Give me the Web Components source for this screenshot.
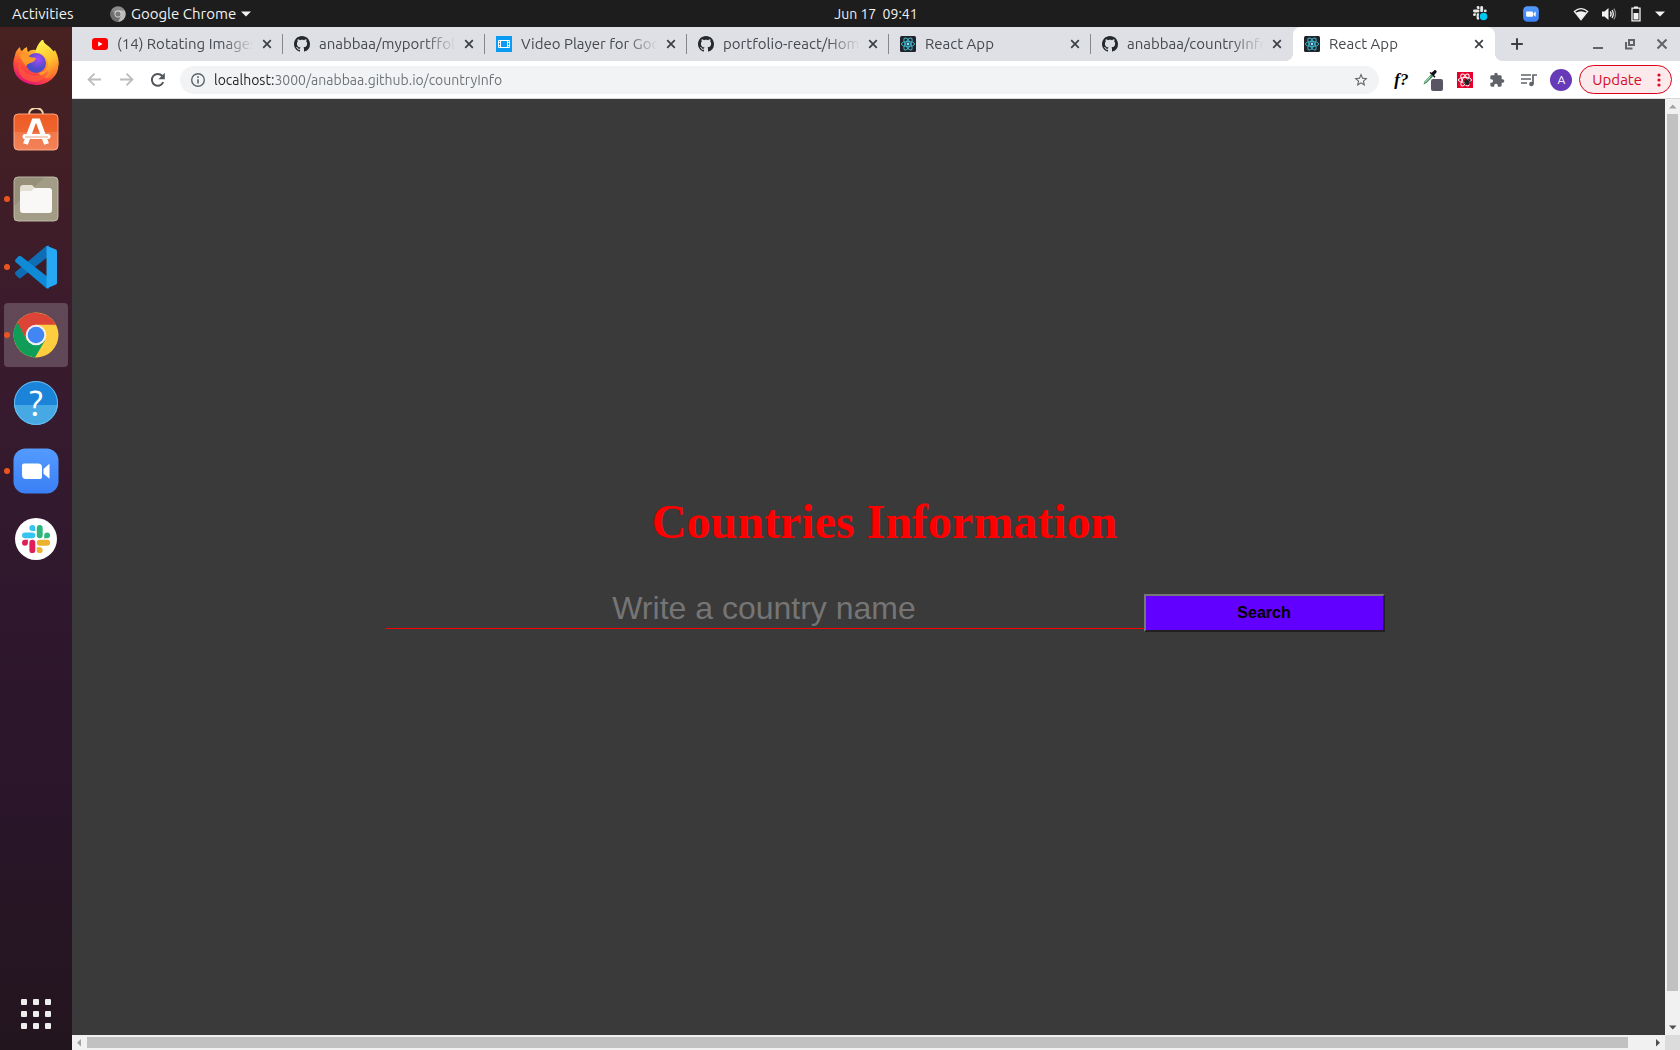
<!DOCTYPE html>
<html lang="en">
<head>
<meta charset="utf-8">
<title>React App</title>
<style>
html,body{margin:0;height:100%}
body{font-family:Ubuntu,"Noto Sans",sans-serif;overflow:hidden}
</style>
</head>
<body>
<desk-top></desk-top>
<script>
const slackArm='<path d="M8.834 5.042a2.528 2.528 0 0 1-2.521-2.52A2.528 2.528 0 0 1 8.834 0a2.528 2.528 0 0 1 2.521 2.522v2.52zM8.834 6.313a2.528 2.528 0 0 1 2.521 2.521 2.528 2.528 0 0 1-2.521 2.521H2.522A2.528 2.528 0 0 1 0 8.834a2.528 2.528 0 0 1 2.522-2.521z"';
const slack=(a,b,c,d)=>slackArm+` fill="${a}"/>`+slackArm+` fill="${b}" transform="rotate(90 12 12)"/>`+slackArm+` fill="${c}" transform="rotate(180 12 12)"/>`+slackArm+` fill="${d}" transform="rotate(270 12 12)"/>`;
const atom='<g fill="none" stroke-width="1"><ellipse cx="8" cy="8" rx="6.6" ry="2.6"/><ellipse cx="8" cy="8" rx="6.6" ry="2.6" transform="rotate(60 8 8)"/><ellipse cx="8" cy="8" rx="6.6" ry="2.6" transform="rotate(120 8 8)"/></g>';
// name: [viewBox, markup]
const ICONS={
youtube:['0 0 16 16','<rect y="2" width="16" height="12" rx="3" fill="#f00"/><path d="M6.2 5.6v4.8L10.6 8z" fill="#fff"/>'],
github:['0 0 16 16','<path fill="#24292e" d="M8 0C3.58 0 0 3.58 0 8c0 3.54 2.29 6.53 5.47 7.59.4.07.55-.17.55-.38 0-.19-.01-.82-.01-1.49-2.01.37-2.53-.49-2.69-.94-.09-.23-.48-.94-.82-1.13-.28-.15-.68-.52-.01-.53.63-.01 1.08.58 1.23.82.72 1.21 1.87.87 2.33.66.07-.52.28-.87.51-1.07-1.78-.2-3.64-.89-3.64-3.95 0-.87.31-1.59.82-2.15-.08-.2-.36-1.02.08-2.12 0 0 .67-.21 2.2.82.64-.18 1.32-.27 2-.27.68 0 1.36.09 2 .27 1.53-1.04 2.2-.82 2.2-.82.44 1.1.16 1.92.08 2.12.51.56.82 1.27.82 2.15 0 3.07-1.87 3.75-3.65 3.95.29.25.54.73.54 1.48 0 1.07-.01 1.93-.01 2.2 0 .21.15.46.55.38A8.013 8.013 0 0016 8c0-4.42-3.58-8-8-8z"/>'],
film:['0 0 16 16','<path fill="#0a9cf5" d="M0 0h16v16H0z"/><path fill="none" stroke="#fff" d="M2.5 4.5h11v7h-11zM4.500 4.500v7M11.500 4.500v7"/><path stroke="#fff" stroke-width=".8" d="M2.500 6.500h2M2.500 9.500h2M11.500 6.500h2M11.500 9.500h2"/>'],
react:['0 0 16 16','<rect width="16" height="16" rx="1.500" fill="#20232a"/><g stroke="#3fb3c9">'+atom+'</g><circle cx="8" cy="8" r="1.400" fill="#7fe6fa"/>'],
bug:['0 0 16 16','<path fill="#e8002d" d="M0 0h16v16H0z"/><g stroke="#fff">'+atom+'</g><g transform="rotate(-30 10 10)"><ellipse cx="10" cy="10" rx="2.200" ry="3.200" fill="#222"/><path stroke="#222" stroke-width=".8" d="M6.500 8l7 4M6.500 12l7-4M6.500 10h7"/></g>'],
close:['0 0 16 16','<path d="M4.200 4.200l7.600 7.600M11.800 4.200l-7.600 7.600" stroke="currentColor" stroke-width="1.700"/>'],
plus:['0 0 16 16','<path d="M8 2.200v11.600M2.200 8h11.600" stroke="#3c4043" stroke-width="2"/>'],
minimize:['0 0 16 16','<path d="M3 12h10" stroke="#606368" stroke-width="2"/>'],
restore:['0 0 16 16','<path d="M7 4h5v5H7zM4 6v6.500h6.500" fill="none" stroke="#606368" stroke-width="2"/>'],
winclose:['0 0 16 16','<path d="M3.500 3.500l9 9M12.500 3.500l-9 9" stroke="#606368" stroke-width="2"/>'],
back:['0 0 16 16','<path d="M15 8H2M8 1.700L1.700 8 8 14.300" fill="none" stroke="#babcbe" stroke-width="1.900"/>'],
forward:['0 0 16 16','<path d="M1 8h13M8 1.700L14.300 8 8 14.300" fill="none" stroke="#babcbe" stroke-width="1.900"/>'],
reload:['0 0 16 16','<path d="M13.200 10.200A5.900 5.900 0 1 1 12.300 4" fill="none" stroke="#54575b" stroke-width="2"/><path d="M14.800.8v6.400H8.400z" fill="#54575b"/>'],
info:['0 0 16 16','<circle cx="8" cy="8" r="6.300" fill="none" stroke="#5f6368" stroke-width="1.400"/><path d="M8 7.200v4.300M8 4.300v1.600" stroke="#5f6368" stroke-width="1.600"/>'],
star:['0 0 24 24','<path fill="#5f6368" d="M22 9.240l-7.190-.62L12 2 9.190 8.630 2 9.240l5.460 4.730L5.820 21 12 17.270 18.180 21l-1.630-7.030L22 9.240zM12 15.400l-3.760 2.270 1-4.280-3.320-2.880 4.380-.38L12 6.100l1.710 4.040 4.380.38-3.320 2.880 1 4.280L12 15.400z"/>'],
dropper:['0 0 22 22','<path d="M1.500 15.500l1-3 6.500-7 2 2-6.500 6.500z" fill="#3c8f55"/><path d="M3 13.500l5.500-6" stroke="#d5ecdc"/><path d="M7.500 3.800l5 5 1-1-1.400-1.600 2.300-2.700c1-1.300-1-3.100-2.200-2.100L9.600 3.800 8.700 3z" fill="#111"/><rect x="9" y="10" width="12" height="12" rx="2" fill="#5a5564"/>'],
puzzle:['0 0 24 24','<path fill="#5f6368" d="M20.500 11H19V7c0-1.100-.9-2-2-2h-4V3.500a2.500 2.500 0 0 0-5 0V5H4c-1.100 0-2 .9-2 2v3.800h1.500a2.700 2.700 0 0 1 0 5.400H2V20c0 1.100.9 2 2 2h3.800v-1.500a2.700 2.700 0 0 1 5.400 0V22H17c1.100 0 2-.9 2-2v-4h1.500a2.500 2.500 0 0 0 0-5z"/>'],
playlist:['0 0 18 16','<path stroke="#5f6368" stroke-width="1.700" d="M1 3h10M1 7h10M1 11h6"/><circle cx="11.400" cy="12" r="2.300" fill="#5f6368"/><path d="M13 12V3h4" fill="none" stroke="#5f6368" stroke-width="1.700"/>'],
dots:['0 0 4 14','<g fill="#d50c22"><circle cx="2" cy="2" r="1.600"/><circle cx="2" cy="7" r="1.600"/><circle cx="2" cy="12" r="1.600"/></g>'],
caret:['0 0 10 6','<path d="M0 .5h10L5 5.500z" fill="#f2f2f2"/>'],
chromegray:['0 0 16 16','<circle cx="8" cy="8" r="7.700" fill="#8b8b8b"/><path d="M8 4.500h6.700A7.700 7.700 0 0 1 8 15.700l3-5.900z" fill="#bdbdbd"/><path d="M1.800 3.600A7.700 7.700 0 0 0 8 15.700l3-5.900H5z" fill="#6e6e6e"/><circle cx="8" cy="8" r="3.400" fill="#ddd"/><circle cx="8" cy="8" r="2.600" fill="#777"/>'],
slacktray:['0 0 28 28',slack('#e8e8e8','#e8e8e8','#e8e8e8','#e8e8e8')+'<circle cx="18" cy="18" r="8" fill="#1d1d1d"/><circle cx="18.500" cy="18.500" r="6.600" fill="#00c8f0"/>'],
zoom:['0 0 46 46','<defs><linearGradient id="z" x2="0" y2="1"><stop stop-color="#549bff"/><stop offset="1" stop-color="#3b7ff5"/></linearGradient></defs><rect x=".5" y=".5" width="45" height="45" rx="12" fill="url(#z)"/><path fill="#fff" d="M9 17.500a2 2 0 0 1 2-2h14a4 4 0 0 1 4 4V29a2 2 0 0 1-2 2H13a4 4 0 0 1-4-4zM30.500 21l6-5.200v15l-6-5z"/>'],
wifi:['0 0 16 14','<path fill="none" stroke="#f2f2f2" stroke-width="1.300" d="M1.300 4.400Q8-1.100 14.700 4.400L8 12.600z"/><path fill="#f2f2f2" d="M2.600 5.800Q8 2.600 13.400 5.800L8 12.600z"/>'],
volume:['0 0 16 14','<path fill="#f2f2f2" d="M1 4.500h2.500L7.500 1v12L3.500 9.500H1z"/><path fill="none" stroke="#f2f2f2" stroke-width="1.300" d="M9.300 4.500q1.800 2.500 0 5M11 3q2.600 4 0 8" /><path fill="none" stroke="#8a8a8a" stroke-width="1.300" d="M12.800 1.600q3.500 5.400 0 10.800"/>'],
battery:['0 0 10 16','<path fill="none" stroke="#f2f2f2" stroke-width="1.300" d="M1 2.200h8v12.600H1z"/><path fill="#f2f2f2" d="M3 .4h4v1.800H3zM2.500 7h5v6.500h-5z"/>'],
firefox:['0 0 46 46','<defs><linearGradient id="fa" x1=".8" y1=".1" x2=".3" y2="1"><stop stop-color="#fff04a"/><stop offset=".35" stop-color="#ffa22b"/><stop offset=".65" stop-color="#ff5035"/><stop offset="1" stop-color="#e3107e"/></linearGradient><radialGradient id="fb" cx=".6" cy=".3"><stop stop-color="#a84bf5"/><stop offset="1" stop-color="#4d4cc8"/></radialGradient><linearGradient id="fc" x1=".3" y1="0" x2=".7" y2="1"><stop stop-color="#fff44f"/><stop offset=".6" stop-color="#ffbf2d"/><stop offset="1" stop-color="#ff6a2f"/></linearGradient></defs><g transform="translate(0 -1)"><path fill="url(#fa)" d="M2 16q1-5 5-8 0 3 2 4 2-3 5-4 0 3 1 5 3-3 8-2l7-8q13 9 15 18 2 12-6 19-7 6-16 6Q9 45 3 36-2 27 2 16z"/><path fill="url(#fc)" d="M22 14Q24 5 30 0q1 6 6 9l4 4 2-2q6 11 2 20-3 6-9 8-7 0-9-5 10-2 9-11Q31 13 22 14z"/><circle cx="23" cy="24" r="10" fill="url(#fb)"/><path fill="#ff9a2a" d="M6 16q7-3 11 2l6 1q-1 4-6 5-3 1-4 3-4-5-7-11z"/><path fill="#ff5a38" opacity=".75" d="M8 17q-3 17 13 20 10 0 14-6-1 10-13 12Q7 42 5 29z"/></g>'],
software:['0 2 46 46','<defs><linearGradient id="s" x2="0" y2="1"><stop stop-color="#ee5a23"/><stop offset="1" stop-color="#f0703f"/></linearGradient></defs><path d="M16 11V8a7 6 0 0 1 14 0v3" fill="none" stroke="#f6d7a6" stroke-width="2"/><rect x="1" y="8" width="44" height="36" rx="4" fill="url(#s)" stroke="#f9a27e"/><path fill="#fff" opacity=".13" d="M1 26h44v14a4 4 0 0 1-4 4H5a4 4 0 0 1-4-4z"/><path stroke="#fff" stroke-width="5" fill="none" d="M12.500 38L21 15h4l8.500 23"/><path stroke="#fff" stroke-width="5" stroke-linecap="round" d="M12 30.500h23"/><path stroke="#e7a184" d="M12 31h23"/>'],
files:['0 0 46 46','<rect x="1" y="1" width="44" height="44" rx="4" fill="#979078" stroke="#b9b4a3"/><path fill="#fff" opacity=".12" d="M1 30L32 1h9a4 4 0 0 1 4 4v36a4 4 0 0 1-4 4H1z"/><path fill="#e3dfd3" d="M7 12a3 3 0 0 1 3-3h9l4 4h10v8H7z"/><path fill="#f9f8f6" d="M7 17q0-2 2-2h9l4-3h14q3 0 3 3v19a3 3 0 0 1-3 3H10a3 3 0 0 1-3-3z"/>'],
vscode:['0 0 46 46','<path fill="#0f6db3" d="M2.500 30.500l3 3.200q1.200 1 2.600 0L36 12V1.500q-2-.5-4 1.500L2.500 28q-1 1.200 0 2.500z"/><path fill="#0f8ad6" d="M2.500 15.500l3-3.200q1.200-1 2.600 0L36 34v10.500q-2 .5-4-1.500L2.500 18q-1-1.200 0-2.500z"/><path fill="#27a8f2" d="M33.500 1.800L43 5.500q1 .5 1 2v31q0 1.500-1 2l-9.500 4z"/>'],
chrome:['0 0 46 46','<circle cx="23" cy="23" r="22.500" fill="#ffcd40"/><path fill="#db4437" d="M3.500 12A22.500 22.500 0 0 1 43 12.700H23L14 28z"/><path fill="#0f9d58" d="M4.500 10.500A22.500 22.500 0 0 0 22 45.500l10-17H14z"/><circle cx="23" cy="23" r="10.300" fill="#f1f1f1"/><circle cx="23" cy="23" r="8.300" fill="#4285f4"/>'],
help:['0 0 46 46','<defs><clipPath id="h"><circle cx="23" cy="23" r="22"/></clipPath></defs><circle cx="23" cy="23" r="22" fill="#1c84d8"/><path clip-path="url(#h)" fill="#47a9e4" d="M0 25h46v21H0z"/><circle cx="23" cy="23" r="21.500" fill="none" stroke="#6bbcec" stroke-width="1"/><text x="23" y="36" text-anchor="middle" font-family="Ubuntu,Noto Sans,sans-serif" font-size="36" fill="#fff">?</text>'],
slack:['0 0 46 46','<circle cx="23" cy="23" r="21" fill="#fff"/><g transform="translate(9 9) scale(1.170)">'+slack('#36c5f0','#2eb67d','#ecb22e','#e01e5a')+'</g>'],
up:['0 0 15 15','<path d="M4 9.500h7.500L7.750 5.500z" fill="#a3a3a3"/>'],
down:['0 0 15 15','<path d="M4 5.500h7.500L7.750 9.500z" fill="#505050"/>'],
left:['0 0 15 15','<path d="M9 4v7.500L5 7.750z" fill="#a3a3a3"/>'],
right:['0 0 15 15','<path d="M6 4v7.500l4-3.750z" fill="#505050"/>']
};
const define=(name,html,after)=>{
  const t=document.createElement('template');t.innerHTML=html;
  customElements.define(name,class extends HTMLElement{
    connectedCallback(){ if(this.shadowRoot)return;
      this.attachShadow({mode:'open'}).append(t.content.cloneNode(true)); if(after)after(this,this.shadowRoot); }
  });
};
const reset=':host,*{box-sizing:border-box}button{font:inherit;color:inherit;background:none;border:0;padding:0;margin:0;display:flex;align-items:center;justify-content:center}';

define('ui-icon','<style>:host{display:block;flex:none;width:var(--w,16px);height:var(--h,var(--w,16px))}svg{display:block;width:100%;height:100%}</style>',(el,r)=>{
  const [box,body]=ICONS[el.getAttribute('name')];
  r.innerHTML+=`<svg viewBox="${box}" aria-hidden="true">${body}</svg>`;
});

define('top-bar',`<style>${reset}
:host{display:grid;grid-template-columns:72px 1fr auto 1fr;align-items:center;height:27px;background:#1d1d1d;color:#f2f2f2;font-size:15px;line-height:24px;white-space:nowrap}
.act{padding-left:12px;justify-content:flex-start}
.app{justify-self:start;margin-left:38px;gap:5px}
.clock{white-space:pre;font-size:14px}
.tray{display:flex;align-items:center;justify-content:flex-end;padding-right:15px}
.tray button+button{margin-left:34px}.tray .sys{gap:12px}
</style>
<button class="act">Activities</button>
<button class="app"><ui-icon name="chromegray"></ui-icon><span>Google Chrome</span><ui-icon name="caret" style="--w:10px;--h:6px"></ui-icon></button>
<button class="clock">Jun 17  09:41</button>
<div class="tray"><button aria-label="Slack"><ui-icon name="slacktray"></ui-icon></button><button aria-label="Zoom"><ui-icon name="zoom"></ui-icon></button>
<button class="sys" aria-label="System menu"><ui-icon name="wifi" style="--w:16px;--h:14px"></ui-icon><ui-icon name="volume" style="--w:16px;--h:14px"></ui-icon><ui-icon name="battery" style="--w:14px;--h:16px"></ui-icon><ui-icon name="caret" style="--w:10px;--h:6px"></ui-icon></button></div>`);

define('dock-item',`<style>${reset}
:host{display:block}
button{width:64px;height:64px;border-radius:4px;position:relative}
:host([active]) button{background:rgba(255,255,255,.2)}
:host([running]) button::before{content:"";position:absolute;left:0;top:29px;width:6px;height:6px;border-radius:3px;background:#e95420}
ui-icon{--w:46px}
</style><button></button>`,(el,r)=>{
  const b=r.querySelector('button');b.setAttribute('aria-label',el.getAttribute('label'));
  b.innerHTML=`<ui-icon name="${el.getAttribute('icon')}"></ui-icon>`;
});

define('side-dock',`<style>${reset}
:host{display:flex;flex-direction:column;gap:4px;padding:4px;width:72px;background:linear-gradient(#482120,#3a1b2d 30%,#2f182d 55%,#2a152a 75%,#23151e)}
.apps{margin-top:auto;width:64px;height:64px}
.grid{display:grid;grid-template-columns:repeat(3,6px);gap:6px}
i{width:6px;height:6px;border-radius:1px;background:#eee}
</style>
<dock-item icon="firefox" label="Firefox"></dock-item>
<dock-item icon="software" label="Software"></dock-item>
<dock-item icon="files" label="Files" running></dock-item>
<dock-item icon="vscode" label="Code" running></dock-item>
<dock-item icon="chrome" label="Chrome" running active></dock-item>
<dock-item icon="help" label="Help"></dock-item>
<dock-item icon="zoom" label="Zoom" running></dock-item>
<dock-item icon="slack" label="Slack"></dock-item>
<button class="apps" aria-label="Show applications"><span class="grid"><i></i><i></i><i></i><i></i><i></i><i></i><i></i><i></i><i></i></span></button>`);

define('browser-tab',`<style>${reset}
:host{display:flex;align-items:center;flex:0 1 202px;min-width:0;height:34px;padding:0 7px 0 11px;position:relative;color:#45484d}
.pick{flex:1;min-width:0;gap:9px;justify-content:flex-start}
.t{flex:1;min-width:0;overflow:hidden;white-space:nowrap;text-align:left;font-size:15px;line-height:24px;-webkit-mask:linear-gradient(90deg,#000 calc(100% - 32px),transparent);mask:linear-gradient(90deg,#000 calc(100% - 32px),transparent)}
.x{margin-left:5px;color:#3c4043}
.sep{width:1px;height:20px;background:#85878b;margin-right:-7px;margin-left:7px}
:host([selected]){background:#fff;border-radius:8px 8px 0 0}
:host([selected])::before,:host([selected])::after{content:"";position:absolute;bottom:0;width:8px;height:8px}
:host([selected])::before{left:-8px;background:radial-gradient(circle at 0 0,transparent 8px,#fff 8px)}
:host([selected])::after{right:-8px;background:radial-gradient(circle at 100% 0,transparent 8px,#fff 8px)}
:host([selected]) .sep,:host([last]) .sep{visibility:hidden}
</style><button class="pick" role="tab"><span class="fav"></span><span class="t"><slot></slot></span></button><button class="x" aria-label="Close tab"><ui-icon name="close"></ui-icon></button><span class="sep"></span>`,(el,r)=>{
  r.querySelector('.fav').innerHTML=`<ui-icon name="${el.getAttribute('icon')}"></ui-icon>`;
});

define('tab-strip',`<style>${reset}
:host{display:flex;align-items:center;height:34px;padding:0 10px 0 9px;background:#dee0e5}
.tabs{display:flex;flex:0 1 1414px;min-width:0}
.new{margin-left:14px}.win{display:flex;gap:16px;margin-left:auto}
</style><div class="tabs" role="tablist">
<browser-tab icon="youtube">(14) Rotating Images</browser-tab>
<browser-tab icon="github">anabbaa/myportffol</browser-tab>
<browser-tab icon="film">Video Player for Goo</browser-tab>
<browser-tab icon="github">portfolio-react/Hom</browser-tab>
<browser-tab icon="react">React App</browser-tab>
<browser-tab icon="github" last>anabbaa/countryInfo</browser-tab>
<browser-tab icon="react" selected>React App</browser-tab></div>
<button class="new" aria-label="New tab"><ui-icon name="plus"></ui-icon></button>
<div class="win"><button aria-label="Minimize"><ui-icon name="minimize"></ui-icon></button><button aria-label="Restore"><ui-icon name="restore"></ui-icon></button><button aria-label="Close"><ui-icon name="winclose"></ui-icon></button></div>`);

define('address-bar',`<style>${reset}
:host{display:flex;align-items:center;height:38px;padding:0 8px 0 6px;background:#fff;border-bottom:1px solid #d5d8dc}
.b{width:32px;height:28px}
.omni{flex:1;min-width:0;display:flex;align-items:center;height:28px;margin:0 6px;padding:0 10px;border-radius:14px;background:#f1f3f4}
input{flex:1;min-width:0;border:0;outline:0;padding:0;margin-left:8px;height:24px;font:14px/24px Ubuntu,"Noto Sans",sans-serif;background:linear-gradient(90deg,#202124 60px,#6b6f74 60px);-webkit-background-clip:text;background-clip:text;color:transparent}
.f{font:italic bold 17px/20px "Liberation Serif",serif;color:#000}
.av{width:22px;height:22px;border-radius:11px;background:#673ab7;color:#fff;font-size:12px;line-height:22px;text-align:center}
.up{height:29px;margin-left:2px;padding:0 10px 0 12px;gap:15px;border:1px solid #d8001b;border-radius:15px;background:#fce9eb;color:#d50c22;font-size:15px;line-height:24px}
</style>
<button class="b" aria-label="Back"><ui-icon name="back" style="--w:15px"></ui-icon></button><button class="b" aria-label="Forward"><ui-icon name="forward" style="--w:15px"></ui-icon></button><button class="b" aria-label="Reload"><ui-icon name="reload"></ui-icon></button>
<div class="omni"><button aria-label="Site information"><ui-icon name="info"></ui-icon></button><input aria-label="Address" spellcheck="false" value="localhost:3000/anabbaa.github.io/countryInfo"><button aria-label="Bookmark"><ui-icon name="star"></ui-icon></button></div>
<button class="b f">f?</button><button class="b" aria-label="Color picker"><ui-icon name="dropper" style="--w:22px"></ui-icon></button><button class="b" aria-label="React tools"><ui-icon name="bug"></ui-icon></button><button class="b" aria-label="Extensions"><ui-icon name="puzzle"></ui-icon></button><button class="b" aria-label="Media"><ui-icon name="playlist" style="--w:18px;--h:16px"></ui-icon></button><button class="b"><span class="av">A</span></button>
<button class="up"><span>Update</span><ui-icon name="dots" style="--w:4px;--h:14px"></ui-icon></button>`);

define('country-search',`<style>${reset}
:host{display:flex;flex-direction:column;align-items:center;justify-content:center;padding-left:32px;background:#3a3a3a;overflow:hidden}
h1{margin:0 0 44px;font:bold 48px/56px "Liberation Serif",serif;color:#f00}
form{display:flex;align-items:flex-start;width:1000px;max-width:100%;margin-bottom:8px}
input{flex:1;min-width:0;height:35px;padding:0 0 6px;border:0;border-bottom:1px solid #f00;background:none;outline:0;text-align:center;color:#fff;font:32px/34px "Liberation Sans",sans-serif}
input::placeholder{color:#757575;opacity:1}
form button{width:241px;height:38px;border:2px solid;border-color:#767676 #212121 #212121 #767676;background:#6200ff;color:#000;font:bold 16px/20px "Liberation Sans",sans-serif}
</style><h1>Countries Information</h1><form onsubmit="return false"><input type="text" placeholder="Write a country name" aria-label="Country name"><button>Search</button></form>`);

define('scroll-bar',`<style>
:host{display:flex;background:#f1f1f1;--w:15px}
.track{flex:1;display:flex}
.thumb{background:#c1c1c1}
:host([dir="v"]){flex-direction:column;width:15px}
:host([dir="v"]) .track{flex-direction:column;padding:0 2px}
:host([dir="v"]) .thumb{height:96.8%}
:host([dir="h"]){height:15px}
:host([dir="h"]) .track{padding:2px 0}
:host([dir="h"]) .thumb{width:98.6%}
</style><span class="a"></span><div class="track"><div class="thumb"></div></div><span class="z"></span>`,(el,r)=>{
  const v=el.getAttribute('dir')==='v';
  r.querySelector('.a').innerHTML=`<ui-icon name="${v?'up':'left'}"></ui-icon>`;
  r.querySelector('.z').innerHTML=`<ui-icon name="${v?'down':'right'}"></ui-icon>`;
});

define('desk-top',`<style>
:host{display:grid;grid-template:auto 1fr / auto 1fr;height:100vh}
top-bar{grid-column:1/-1}
.win{display:flex;flex-direction:column;min-width:0;min-height:0}
.view{flex:1;min-height:0;display:grid;grid-template:minmax(0,1fr) 15px / minmax(0,1fr) 15px;background:#dcdcdc}
</style><top-bar></top-bar><side-dock></side-dock><div class="win"><tab-strip></tab-strip><address-bar></address-bar><div class="view"><country-search></country-search><scroll-bar dir="v"></scroll-bar><scroll-bar dir="h"></scroll-bar></div></div>`);
</script>
</body>
</html>
